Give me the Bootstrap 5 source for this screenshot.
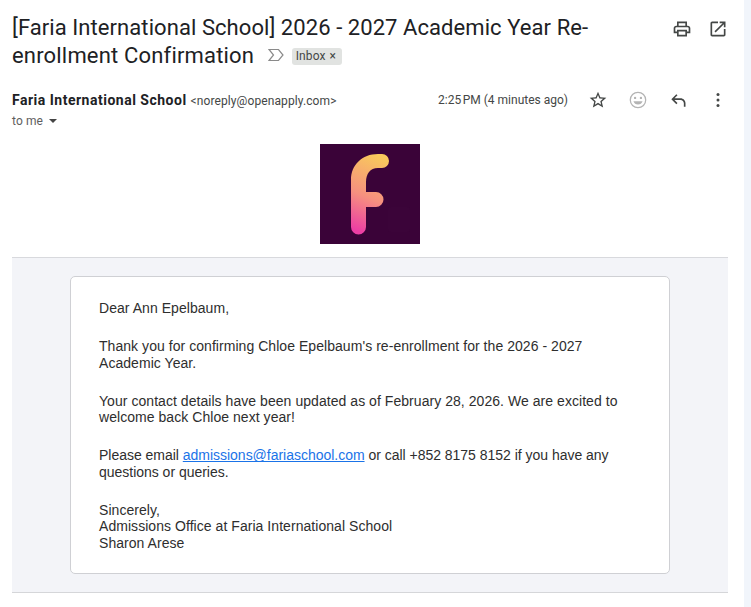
<!DOCTYPE html>
<html lang="en">
<head>
  <meta charset="UTF-8">
  <title>Re-enrollment Confirmation</title>
  <link href="https://cdn.jsdelivr.net/npm/bootstrap@5.3.2/dist/css/bootstrap.min.css" rel="stylesheet">
  <style>
    html, body { height: 100%; }
    body { background: #f1f5fb; overflow: hidden; }
    .mail-pane { width: 744px; height: 607px; background: #fff; padding: 0 16px 0 12px; font-family: Roboto, sans-serif; color: #202124; }
    .mail-head { height: 90px; padding-top: 14px; }
    .mail-subject { font-size: 22px; line-height: 28px; width: 620px; margin: 0; font-weight: 400; letter-spacing: .07px; }
    .mail-subject2 { letter-spacing: .18px; }
    .mail-sigma { margin: 0 8px 0 8px; vertical-align: 1px; }
    .mail-inbox { display: inline-block; background: #e1e3e1; border-radius: 3px; font-size: 12px; line-height: 17px; padding: 0 6px 0 4px; color: #444746; vertical-align: 3px; letter-spacing: .1px; }
    .mail-inbox b { font-weight: 400; margin-left: 4px; }
    .mail-tools { gap: 16px; padding-top: 5px; }
    .mail-meta { height: 34px; }
    .mail-from { font-size: 14px; line-height: 20px; font-weight: 700; letter-spacing: .5px; }
    .mail-addr { font-size: 12px; font-weight: 400; color: #444746; letter-spacing: .1px; margin-left: 0; }
    .mail-tome { font-size: 12px; line-height: 20px; color: #5e5e5e; letter-spacing: .1px; }
    .mail-caret { display: inline-block; margin-left: 6px; vertical-align: 2px; border: 4px solid transparent; border-top: 4px solid #444; border-bottom: 0; }
    .mail-time { font-size: 12px; line-height: 20px; color: #444746; margin-right: 20px; }
    .mail-actions { gap: 20px; }
    .mail-logo { height: 134px; padding-top: 20px; border-bottom: 1px solid #d8d9dd; }
    .mail-logo svg { display: block; }
    .mail-body { background: #f3f4f8; height: 335px; padding-top: 18px; border-bottom: 1px solid #d5d6d9; }
    .mail-card { width: 600px; height: 298px; margin: 0 auto 0 58px; background: #fff; border: 1px solid #cfd0d4; border-radius: 5px; padding: 23px 28px; font-family: "Liberation Sans", Arial, sans-serif; font-size: 14px; line-height: 16.3px; color: #2e2e2e; letter-spacing: .05px; }
    .mail-card p { margin: 0 0 22px; }
    .mail-card p.mail-tight { letter-spacing: -.02px; }
    .mail-card a { color: #1a73e8; }
  </style>
</head>
<body>
  <div class="mail-pane">
    <div class="mail-head d-flex justify-content-between">
      <h1 class="mail-subject">[Faria International School] 2026 - 2027 Academic Year Re-<span class="mail-subject2">enrollment Confirmation</span>
        <svg class="mail-sigma" width="16" height="14" viewBox="0 0 16 14" fill="none" stroke="#8a8a8a" stroke-width="1.2"><path d="M1 1.5h9.5L15 7l-4.5 5.5H1L5.5 7z"/></svg><span class="mail-inbox">Inbox<b>×</b></span>
      </h1>
      <div class="mail-tools d-flex align-items-start">
        <svg width="20" height="20" viewBox="0 0 24 24" fill="#444746"><path d="M19 8h-1V3H6v5H5c-1.66 0-3 1.34-3 3v6h4v4h12v-4h4v-6c0-1.66-1.34-3-3-3zM8 5h8v3H8V5zm8 14H8v-4h8v4zm4-4h-2v-2H6v2H4v-4c0-.55.45-1 1-1h14c.55 0 1 .45 1 1v4z"/></svg>
        <svg width="20" height="20" viewBox="0 0 24 24" fill="#444746"><path d="M19 19H5V5h7V3H5c-1.1 0-2 .9-2 2v14c0 1.1.9 2 2 2h14c1.1 0 2-.9 2-2v-7h-2v7zM14 3v2h3.59l-9.83 9.83 1.41 1.41L19 6.41V10h2V3h-7z"/></svg>
      </div>
    </div>
    <div class="mail-meta d-flex justify-content-between">
      <div>
        <div class="mail-from">Faria International School <span class="mail-addr">&lt;noreply@openapply.com&gt;</span></div>
        <div class="mail-tome">to me<span class="mail-caret"></span></div>
      </div>
      <div class="d-flex align-items-start">
        <span class="mail-time">2:25&#8239;PM (4 minutes ago)</span>
        <div class="mail-actions d-flex">
          <svg width="20" height="20" viewBox="0 0 24 24" fill="#444746"><path d="M22 9.24l-7.19-.62L12 2 9.19 8.63 2 9.24l5.46 4.73L5.82 21 12 17.27 18.18 21l-1.63-7.03L22 9.24zM12 15.4l-3.76 2.27 1-4.28-3.32-2.88 4.38-.38L12 6.1l1.71 4.04 4.38.38-3.32 2.88 1 4.28L12 15.4z"/></svg>
          <svg width="20" height="20" viewBox="0 0 24 24" fill="#b4b4b4"><path d="M12 2a10 10 0 1 0 0 20 10 10 0 0 0 0-20zm0 18.5a8.5 8.5 0 1 1 0-17 8.5 8.5 0 0 1 0 17z"/><circle cx="8.5" cy="9.5" r="1.4"/><circle cx="15.5" cy="9.5" r="1.4"/><path d="M12 17.5c2.6 0 4.8-1.7 5.5-4h-11c.7 2.3 2.9 4 5.5 4z"/></svg>
          <svg width="20" height="20" viewBox="0 0 24 24" fill="#444746"><path d="M21 20v-4c0-3.3-2.7-6-6-6H7.8l3.6-3.6L10 5 4 11l6 6 1.4-1.4L7.8 12H15c2.2 0 4 1.8 4 4v4z"/></svg>
          <svg width="20" height="20" viewBox="0 0 24 24" fill="#444746"><circle cx="12" cy="5.5" r="1.8"/><circle cx="12" cy="12" r="1.8"/><circle cx="12" cy="18.5" r="1.8"/></svg>
        </div>
      </div>
    </div>
    <div class="mail-logo d-flex justify-content-center">
      <svg width="100" height="100" viewBox="0 0 100 100">
        <defs><linearGradient id="fgrad" x1="0.4" y1="1" x2="0.6" y2="0"><stop offset="0" stop-color="#ec3fa4"/><stop offset="0.45" stop-color="#f6907f"/><stop offset="1" stop-color="#f8c95c"/></linearGradient></defs>
        <rect width="100" height="100" fill="#3a0338"/>
        <rect x="68" y="63" width="22" height="25" rx="3" fill="#3b0439"/>
        <path d="M31 83V36C31 21 42 10 58 10h4a7 7 0 0 1 0 14h-4c-8 0-12 6-12 14v10h10a7.5 7.5 0 0 1 0 15H46v20a7.5 7.5 0 0 1-15 0z" fill="url(#fgrad)"/>
      </svg>
    </div>
    <div class="mail-body">
      <div class="mail-card">
        <p>Dear Ann Epelbaum,</p>
        <p>Thank you for confirming Chloe Epelbaum's re-enrollment for the 2026 - 2027 Academic Year.</p>
        <p>Your contact details have been updated as of February 28, 2026. We are excited to welcome back Chloe next year!</p>
        <p class="mail-tight">Please email <a href="#">admissions@fariaschool.com</a> or call +852 8175 8152 if you have any questions or queries.</p>
        <p>Sincerely,<br>Admissions Office at Faria International School<br>Sharon Arese</p>
      </div>
    </div>
  </div>
  <script src="https://cdn.jsdelivr.net/npm/bootstrap@5.3.2/dist/js/bootstrap.bundle.min.js"></script>
</body>
</html>
